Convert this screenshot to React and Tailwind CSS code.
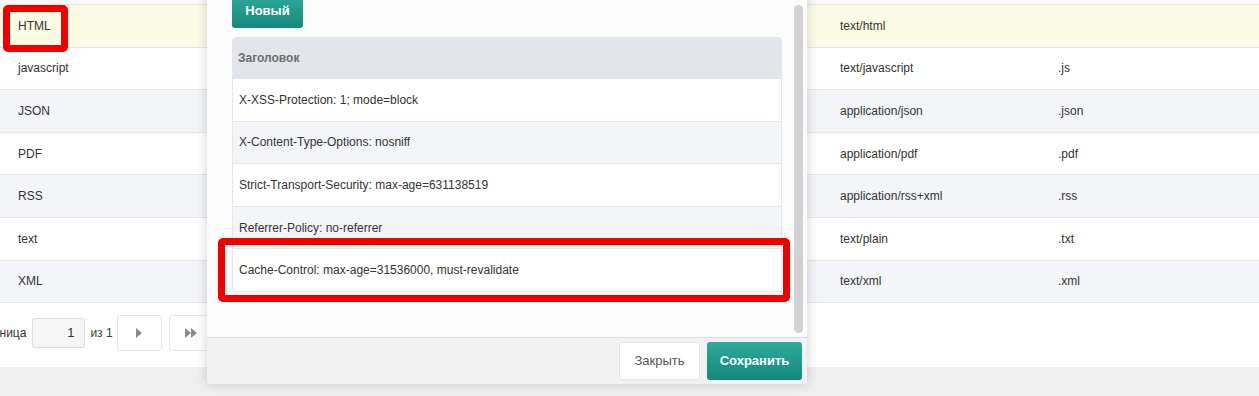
import React from 'react';

const ROWS = [
  { name: 'HTML', mime: 'text/html', ext: '', bg: 'bg-[#fcfce6]' },
  { name: 'javascript', mime: 'text/javascript', ext: '.js', bg: 'bg-white' },
  { name: 'JSON', mime: 'application/json', ext: '.json', bg: 'bg-[#f4f5f8]' },
  { name: 'PDF', mime: 'application/pdf', ext: '.pdf', bg: 'bg-white' },
  { name: 'RSS', mime: 'application/rss+xml', ext: '.rss', bg: 'bg-[#f4f5f8]' },
  { name: 'text', mime: 'text/plain', ext: '.txt', bg: 'bg-white' },
  { name: 'XML', mime: 'text/xml', ext: '.xml', bg: 'bg-[#f4f5f8]' },
];

const HEADERS = [
  { text: 'X-XSS-Protection: 1; mode=block', bg: 'bg-white' },
  { text: 'X-Content-Type-Options: nosniff', bg: 'bg-[#f4f5f8]' },
  { text: 'Strict-Transport-Security: max-age=631138519', bg: 'bg-white' },
  { text: 'Referrer-Policy: no-referrer', bg: 'bg-[#f4f5f8]' },
  { text: 'Cache-Control: max-age=31536000, must-revalidate', bg: 'bg-white' },
];

function PlayIcon({ double }) {
  return (
    <svg width={double ? 14 : 8} height="10" viewBox={double ? '0 0 14 10' : '0 0 8 10'} fill="#8a8a8a">
      <path d="M1 0 L7 5 L1 10 Z" />
      {double && <path d="M7 0 L13 5 L7 10 Z" />}
    </svg>
  );
}

export default function App() {
  return (
    <div className="relative w-[1259px] h-[396px] overflow-hidden bg-[#f0f0f0] font-['Liberation_Sans',Arial,sans-serif] text-[12px] text-[#333]">
      {/* Background table */}
      <div className="bg-white">
        <div className="h-[5px] bg-[#fafafa] border-b border-[#e6e6e6]" />
        {ROWS.map((r) => (
          <div key={r.name} className={`flex items-center h-[42.6px] border-b border-[#e4e6ea] ${r.bg}`}>
            <div className="w-[822px] pl-[18px]">{r.name}</div>
            <div className="w-[218px] pl-[18px]">{r.mime}</div>
            <div className="flex-1 pl-[18px]">{r.ext}</div>
          </div>
        ))}
        {/* Pager */}
        <div className="flex items-center h-[64px] pb-[4px]">
          <span className="-ml-[28px] mr-[6px]">Страница</span>
          <div className="w-[53px] h-[30px] border border-[#dcdcdc] rounded-[3px] bg-[#f6f6f6] flex items-center justify-end pr-[10px] text-[13px]">1</div>
          <span className="ml-[5px] mr-[4px] text-[#2f4a2f]">из 1</span>
          <div className="w-[45px] h-[36px] border border-[#e6e6e6] rounded-[3px] bg-white flex items-center justify-center">
            <PlayIcon />
          </div>
          <div className="ml-[7px] w-[45px] h-[36px] border border-[#e6e6e6] rounded-[3px] bg-white flex items-center justify-center">
            <PlayIcon double />
          </div>
        </div>
      </div>

      {/* Highlight around HTML */}
      <div className="absolute left-[3px] top-[5px] w-[65px] h-[47px] border-[7px] border-[#f20000] rounded-[5px]" />

      {/* Modal */}
      <div className="absolute left-[207px] top-[-10px] w-[600px] rounded-b-[3px] bg-white shadow-[0_0_12px_rgba(0,0,0,0.18)]">
        <div className="flex h-[347px] bg-[#fbfbfb]">
          <div className="w-[550px] ml-[25px] pt-[4px]">
            <button className="w-[71px] h-[34px] rounded-[3px] bg-gradient-to-b from-[#2eab9b] to-[#13897b] text-white font-bold text-[13px]">
              Новый
            </button>
            <div className="mt-[9px] border border-[#e3e6ea] rounded-t-[4px] overflow-hidden">
              <div className="h-[40px] bg-[#e2e6ea] flex items-center pl-[5px] font-bold text-[#6c6f73]">Заголовок</div>
              {HEADERS.map((h) => (
                <div key={h.text} className={`h-[42.6px] flex items-center pl-[6px] border-t border-[#e4e6ea] ${h.bg}`}>
                  {h.text}
                </div>
              ))}
            </div>
          </div>
          <div className="ml-[12px] pt-[15px] pb-[4px]">
            <div className="w-[9px] h-full rounded-[5px] bg-[#d2d2d2]" />
          </div>
        </div>
        <div className="h-[47px] bg-[#f2f2f2] border-t border-[#dedede] flex items-center justify-end pr-[5px] gap-[7px] rounded-b-[3px]">
          <button className="w-[81px] h-[38px] rounded-[3px] bg-white border border-[#e4e4e4] text-[#555] text-[13px]">Закрыть</button>
          <button className="w-[95px] h-[38px] rounded-[3px] bg-gradient-to-b from-[#2eab9b] to-[#13897b] text-white font-bold text-[13px]">
            Сохранить
          </button>
        </div>

        {/* Highlight around Cache-Control */}
        <div className="absolute left-[11px] top-[248px] w-[572px] h-[64px] border-[7px] border-[#f20000] rounded-[5px]" />
      </div>
    </div>
  );
}
